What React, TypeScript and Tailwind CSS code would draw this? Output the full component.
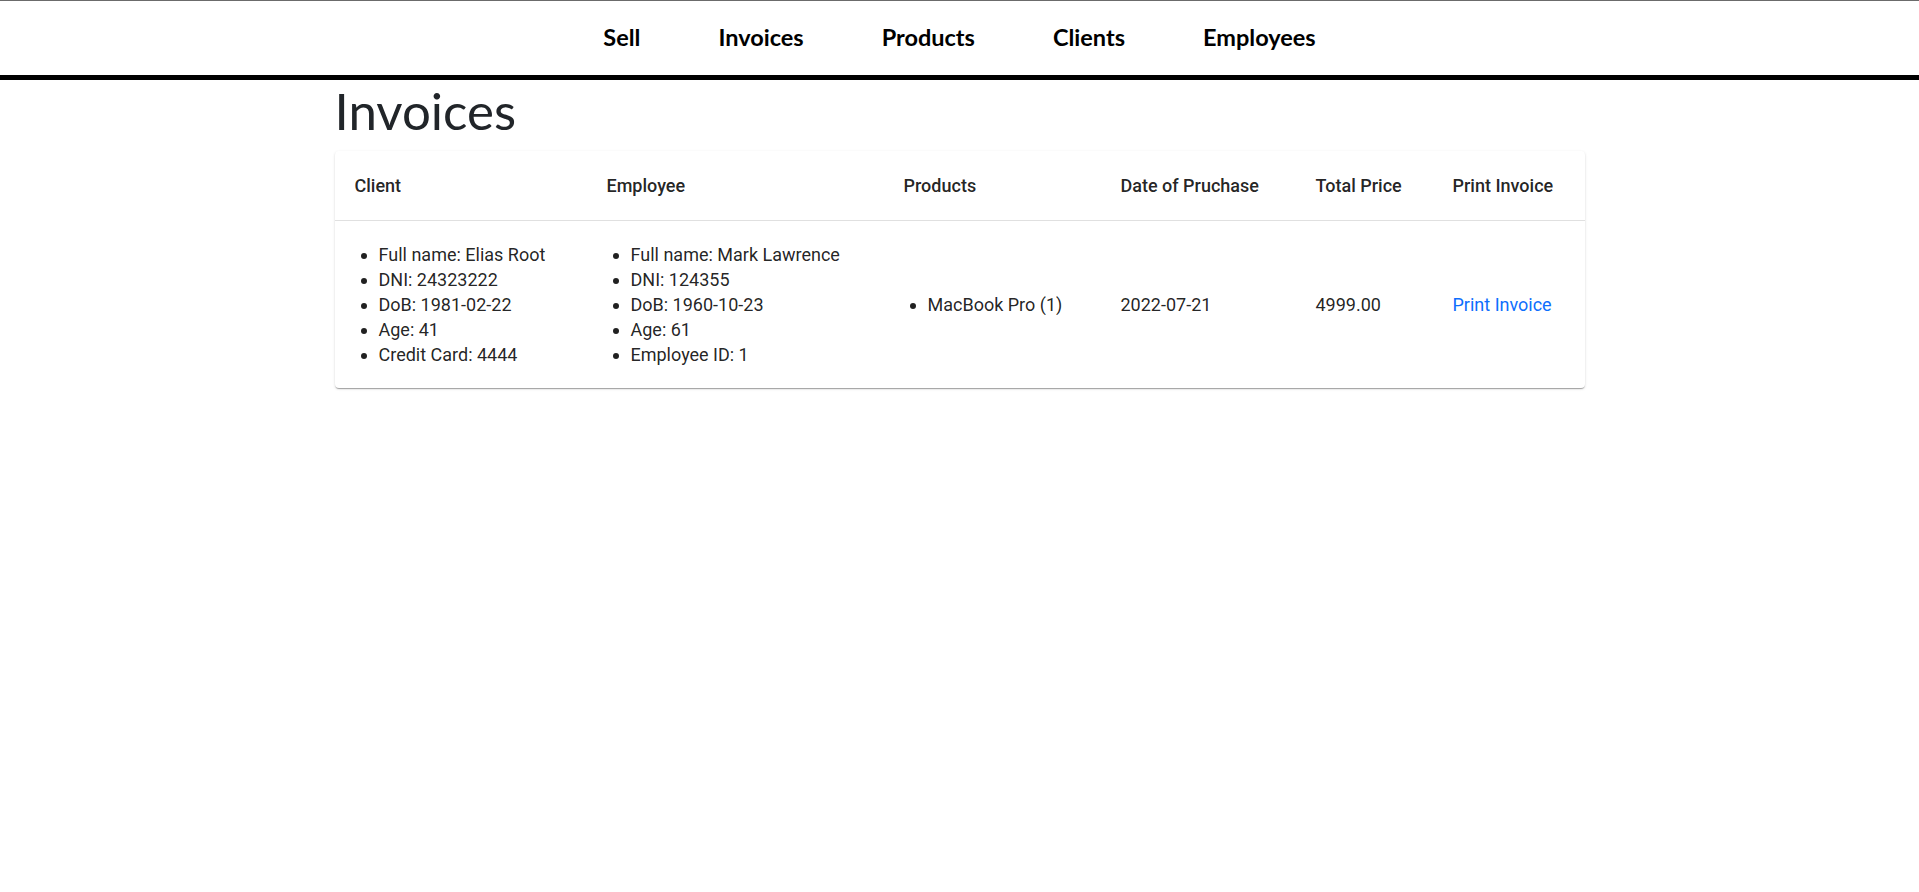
import React from "react";

const navItems = ["Sell", "Invoices", "Products", "Clients", "Employees"];

const columns = [
  { label: "Client", width: "w-[252px]" },
  { label: "Employee", width: "w-[297px]" },
  { label: "Products", width: "w-[217px]" },
  { label: "Date of Pruchase", width: "w-[195px]" },
  { label: "Total Price", width: "w-[137px]" },
  { label: "Print Invoice", width: "w-[152px]" },
];

const invoices = [
  {
    client: [
      "Full name: Elias Root",
      "DNI: 24323222",
      "DoB: 1981-02-22",
      "Age: 41",
      "Credit Card: 4444",
    ],
    employee: [
      "Full name: Mark Lawrence",
      "DNI: 124355",
      "DoB: 1960-10-23",
      "Age: 61",
      "Employee ID: 1",
    ],
    products: ["MacBook Pro (1)"],
    date: "2022-07-21",
    total: "4999.00",
  },
];

const Bullets: React.FC<{ items: string[] }> = ({ items }) => (
  <ul className="list-disc pl-6 leading-[25px]">
    {items.map((item) => (
      <li key={item}>{item}</li>
    ))}
  </ul>
);

export default function App() {
  return (
    <div className="min-h-screen bg-white font-['Lato',sans-serif]">
      <nav className="h-[80px] border-t border-t-[#6b6b6b] border-b-[5px] border-b-black flex justify-center items-center gap-[78px]">
        {navItems.map((item) => (
          <a
            key={item}
            href="#"
            className="text-[23.5px] font-bold text-black leading-none"
          >
            {item}
          </a>
        ))}
      </nav>

      <main className="w-[1250px] mx-auto">
        <h1 className="text-[51px] leading-[1.2] font-normal text-[#212529] mb-[10px]">
          Invoices
        </h1>

        <div className="bg-white rounded-[4px] shadow-[0px_2px_1px_-1px_rgba(0,0,0,0.2),0px_1px_1px_0px_rgba(0,0,0,0.14),0px_1px_3px_0px_rgba(0,0,0,0.12)] overflow-hidden">
          <table className="w-full table-fixed border-collapse font-['Roboto',sans-serif] text-[18px] text-[rgba(0,0,0,0.87)]">
            <thead>
              <tr className="border-b border-[#e0e0e0]">
                {columns.map((col) => (
                  <th
                    key={col.label}
                    className={`${col.width} text-left font-medium pl-5 py-[22px] leading-[25px]`}
                  >
                    {col.label}
                  </th>
                ))}
              </tr>
            </thead>
            <tbody>
              {invoices.map((inv) => (
                <tr key={inv.date} className="align-middle">
                  <td className="pl-5 pt-[21px] pb-[21px]">
                    <Bullets items={inv.client} />
                  </td>
                  <td className="pl-5 pt-[21px] pb-[21px]">
                    <Bullets items={inv.employee} />
                  </td>
                  <td className="pl-5 pt-[21px] pb-[21px]">
                    <Bullets items={inv.products} />
                  </td>
                  <td className="pl-5">{inv.date}</td>
                  <td className="pl-5">{inv.total}</td>
                  <td className="pl-5">
                    <a href="#" className="text-[#0d6efd]">
                      Print Invoice
                    </a>
                  </td>
                </tr>
              ))}
            </tbody>
          </table>
        </div>
      </main>
    </div>
  );
}
